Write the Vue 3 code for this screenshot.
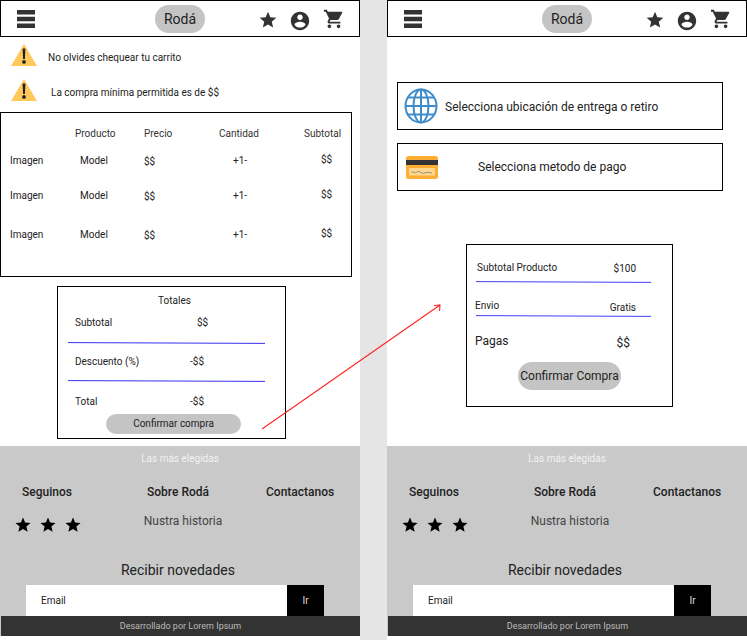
<script setup>
const tableRows = [
  { gap: 'row-a' },
  { gap: 'row-b' },
  { gap: 'row-c' },
];
const footerStars = [1, 2, 3];
</script>

<template>
  <div class="page">
    <section class="screen">
      <header class="topbar">
        <svg class="menu-icon" viewBox="0 0 18 18"><path d="M0 0h18v4.5H0zM0 6.8h18v4.5H0zM0 13.5h18V18H0z" /></svg>
        <span class="brand">Rodá</span>
        <svg class="top-icon star" viewBox="0 0 24 24"><path d="M12 17.27 18.18 21l-1.64-7.03L22 9.24l-7.19-.61L12 2 9.19 8.63 2 9.24l5.46 4.73L5.82 21z" /></svg>
        <svg class="top-icon account" viewBox="0 0 24 24"><path d="M12 2C6.48 2 2 6.48 2 12s4.48 10 10 10 10-4.48 10-10S17.52 2 12 2zm0 3c1.66 0 3 1.34 3 3s-1.34 3-3 3-3-1.34-3-3 1.34-3 3-3zm0 14.2c-2.5 0-4.71-1.28-6-3.22.03-1.99 4-3.08 6-3.08s5.97 1.09 6 3.08c-1.29 1.94-3.5 3.22-6 3.22z" /></svg>
        <svg class="top-icon cart" viewBox="0 0 24 24"><path d="M7 18c-1.1 0-1.99.9-1.99 2S5.900 22 7 22s2-.9 2-2-.9-2-2-2zM1 2v2h2l3.600 7.590-1.350 2.450c-.16.280-.25.610-.25.960 0 1.100.9 2 2 2h12v-2H7.420c-.14 0-.25-.110-.25-.25l.03-.12.9-1.630h7.450c.75 0 1.410-.41 1.750-1.030l3.580-6.490A1 1 0 0 0 20 4H5.210l-.94-2H1zm16 16c-1.100 0-1.990.9-1.990 2s.89 2 1.990 2 2-.9 2-2-.9-2-2-2z" /></svg>
      </header>

      <div class="alert alert-first">
        <svg class="warn" viewBox="0 0 26 22"><path d="M13 0 26 22H0z" fill="#ffc95c" /><path d="M11.600 4.500h2.800l-.5 10.500h-1.800zM13 16a1.900 1.900 0 1 1 0 3.800 1.900 1.900 0 0 1 0-3.800z" fill="#222" /></svg>
        <span>No olvides chequear tu carrito</span>
      </div>
      <div class="alert alert-second">
        <svg class="warn" viewBox="0 0 26 22"><path d="M13 0 26 22H0z" fill="#ffc95c" /><path d="M11.600 4.500h2.800l-.5 10.500h-1.800zM13 16a1.900 1.900 0 1 1 0 3.800 1.900 1.900 0 0 1 0-3.800z" fill="#222" /></svg>
        <span>La compra mínima permitida es de $$</span>
      </div>

      <div class="cart-table">
        <div class="table-row table-head">
          <span></span><span>Producto</span><span>Precio</span><span class="center">Cantidad</span><span class="last">Subtotal</span>
        </div>
        <div v-for="row in tableRows" :key="row.gap" class="table-row" :class="row.gap">
          <span>Imagen</span><span class="model">Model</span><span class="low">$$</span><span class="center qty">+1-</span><span class="last high">$$</span>
        </div>
      </div>

      <div class="totals">
        <div class="totals-title">Totales</div>
        <div class="total-row first"><span>Subtotal</span><span class="value-a">$$</span></div>
        <svg class="blue-line line-a" viewBox="0 0 197 2" preserveAspectRatio="none"><path d="M0 .6 197 1.400" /></svg>
        <div class="total-row second"><span>Descuento (%)</span><span class="value-b">-$$</span></div>
        <svg class="blue-line line-b" viewBox="0 0 197 2" preserveAspectRatio="none"><path d="M0 .6 197 1.400" /></svg>
        <div class="total-row third"><span>Total</span><span class="value-b">-$$</span></div>
        <button class="confirm">Confirmar compra</button>
      </div>

      <footer class="footer">
        <div class="footer-top">Las más elegidas</div>
        <div class="footer-cols">
          <div class="col col-follow">
            <strong>Seguinos</strong>
            <div class="stars">
              <svg v-for="s in footerStars" :key="s" viewBox="0 0 24 24"><path d="M12 17.27 18.18 21l-1.64-7.03L22 9.24l-7.19-.61L12 2 9.19 8.63 2 9.24l5.46 4.73L5.820 21z" /></svg>
            </div>
          </div>
          <div class="col col-about">
            <strong>Sobre Rodá</strong>
            <span>Nustra historia</span>
          </div>
          <div class="col col-contact">
            <strong>Contactanos</strong>
          </div>
        </div>
        <div class="news-title">Recibir novedades</div>
        <div class="news-form">
          <div class="email">Email</div>
          <div class="go">Ir</div>
        </div>
        <div class="credits">Desarrollado por Lorem Ipsum</div>
      </footer>
    </section>

    <section class="screen">
      <header class="topbar">
        <svg class="menu-icon" viewBox="0 0 18 18"><path d="M0 0h18v4.5H0zM0 6.8h18v4.5H0zM0 13.5h18V18H0z" /></svg>
        <span class="brand">Rodá</span>
        <svg class="top-icon star" viewBox="0 0 24 24"><path d="M12 17.27 18.18 21l-1.64-7.03L22 9.24l-7.19-.61L12 2 9.19 8.63 2 9.24l5.46 4.73L5.82 21z" /></svg>
        <svg class="top-icon account" viewBox="0 0 24 24"><path d="M12 2C6.48 2 2 6.48 2 12s4.48 10 10 10 10-4.48 10-10S17.52 2 12 2zm0 3c1.66 0 3 1.34 3 3s-1.34 3-3 3-3-1.34-3-3 1.34-3 3-3zm0 14.2c-2.5 0-4.71-1.28-6-3.22.03-1.99 4-3.08 6-3.08s5.97 1.09 6 3.08c-1.29 1.94-3.5 3.22-6 3.22z" /></svg>
        <svg class="top-icon cart" viewBox="0 0 24 24"><path d="M7 18c-1.1 0-1.99.9-1.99 2S5.900 22 7 22s2-.9 2-2-.9-2-2-2zM1 2v2h2l3.600 7.590-1.350 2.450c-.16.280-.25.610-.25.960 0 1.100.9 2 2 2h12v-2H7.420c-.14 0-.25-.110-.25-.25l.03-.12.9-1.630h7.450c.75 0 1.410-.41 1.750-1.030l3.580-6.490A1 1 0 0 0 20 4H5.210l-.94-2H1zm16 16c-1.100 0-1.990.9-1.990 2s.89 2 1.990 2 2-.9 2-2-.9-2-2-2z" /></svg>
      </header>

      <div class="choice choice-place">
        <svg class="globe" viewBox="0 0 34 36" fill="none" stroke="#3f8ccb" stroke-width="2">
          <ellipse cx="17" cy="18" rx="15.500" ry="16.500" />
          <ellipse cx="17" cy="18" rx="7.500" ry="16.500" />
          <path d="M17 1.500v33M1.500 18h31M4 9.500h26M4 26.500h26" />
        </svg>
        <span>Selecciona ubicación de entrega o retiro</span>
      </div>
      <div class="choice choice-pay">
        <svg class="card" viewBox="0 0 32 23">
          <rect width="32" height="23" rx="2.500" fill="#ffad33" />
          <rect y="4" width="32" height="5" fill="#333" />
          <rect x="3" y="12" width="26" height="7.500" fill="#ffd890" />
          <path d="M5 16.500c2-2 3 1 5 0s3-1.500 5 0 3 .5 5 0 3 0 6 .5" fill="none" stroke="#777" stroke-width=".8" />
        </svg>
        <span>Selecciona metodo de pago</span>
      </div>

      <div class="summary">
        <div class="sum-row sum-first"><span>Subtotal Producto</span><span class="sum-price">$100</span></div>
        <svg class="blue-line sum-line sum-line-a" viewBox="0 0 197 2" preserveAspectRatio="none"><path d="M0 .6 197 1.400" /></svg>
        <div class="sum-row sum-second"><span>Envio</span><span class="sum-free">Gratis</span></div>
        <svg class="blue-line sum-line sum-line-b" viewBox="0 0 197 2" preserveAspectRatio="none"><path d="M0 .6 197 1.400" /></svg>
        <div class="sum-row sum-pay"><span>Pagas</span><span class="sum-total">$$</span></div>
        <button class="confirm-big">Confirmar Compra</button>
      </div>

      <footer class="footer">
        <div class="footer-top">Las más elegidas</div>
        <div class="footer-cols">
          <div class="col col-follow">
            <strong>Seguinos</strong>
            <div class="stars">
              <svg v-for="s in footerStars" :key="s" viewBox="0 0 24 24"><path d="M12 17.27 18.18 21l-1.64-7.03L22 9.24l-7.19-.61L12 2 9.19 8.63 2 9.24l5.46 4.73L5.820 21z" /></svg>
            </div>
          </div>
          <div class="col col-about">
            <strong>Sobre Rodá</strong>
            <span>Nustra historia</span>
          </div>
          <div class="col col-contact">
            <strong>Contactanos</strong>
          </div>
        </div>
        <div class="news-title">Recibir novedades</div>
        <div class="news-form">
          <div class="email">Email</div>
          <div class="go">Ir</div>
        </div>
        <div class="credits">Desarrollado por Lorem Ipsum</div>
      </footer>
    </section>

    <svg class="arrow" viewBox="0 0 747 640" fill="none" stroke="#f22" stroke-width="1.100">
      <path d="M262 429 440 305M434 305.500 440 305 439.500 311" />
    </svg>
  </div>
</template>

<style scoped>
.page {
  position: relative;
  display: flex;
  gap: 27px;
  width: 747px;
  height: 640px;
  overflow: hidden;
  background: #e5e5e5;
  font-family: Roboto, "Liberation Sans", sans-serif;
  color: #222;
}
.screen {
  display: flex;
  flex-direction: column;
  width: 360px;
  height: 640px;
  background: #fff;
}
.topbar {
  display: flex;
  align-items: center;
  box-sizing: border-box;
  width: 360px;
  height: 37px;
  flex: none;
  border: 1px solid #000;
}
.menu-icon {
  width: 18px;
  height: 18px;
  margin-left: 16px;
  fill: #333;
}
.brand {
  display: flex;
  align-items: center;
  justify-content: center;
  width: 50px;
  height: 28px;
  margin-left: 120px;
  border-radius: 14px;
  background: #c4c4c4;
  font-size: 14px;
}
.top-icon {
  width: 22px;
  height: 22px;
  fill: #333;
}
.star { width: 20px; height: 20px; margin-left: 53px; margin-top: 3px; }
.account { margin-left: 11px; margin-top: 4px; }
.cart { margin-left: 12px; margin-top: 1px; }

.alert {
  display: flex;
  align-items: center;
  font-size: 10px;
}
.alert span { padding-top: 4px; }
.warn {
  width: 26px;
  height: 22px;
  flex: none;
}
.alert-first { margin: 7px 0 0 11px; gap: 11px; }
.alert-second { margin: 13px 0 0 11px; gap: 14px; }

.cart-table {
  box-sizing: border-box;
  width: 352px;
  height: 165px;
  margin-top: 11px;
  padding-top: 15px;
  border: 1px solid #000;
  font-size: 10px;
}
.table-row {
  display: grid;
  grid-template-columns: 65px 69px 71px 48px 1fr;
  height: 12px;
  padding-left: 9px;
  line-height: 12px;
}
.table-row .center { text-align: center; }
.table-row .qty { padding-left: 2px; }
.table-row .last { padding-left: 41px; }
.table-row .model { padding-left: 5px; }
.table-row .low { margin-top: 1px; }
.table-row .high { margin-top: -1px; padding-left: 58px; }
.table-head { color: #333; }
.row-a { margin-top: 15px; }
.row-b { margin-top: 23px; }
.row-c { margin-top: 27px; }

.totals {
  box-sizing: border-box;
  display: flex;
  flex-direction: column;
  width: 229px;
  height: 153px;
  margin: 9px 0 0 57px;
  padding: 8px 0 0 10px;
  border: 1px solid #000;
  font-size: 10px;
}
.totals-title {
  width: 213px;
  text-align: center;
  line-height: 12px;
}
.total-row {
  display: flex;
  height: 12px;
  padding-left: 7px;
  line-height: 12px;
}
.total-row span:first-child { width: 115px; }
.first { margin-top: 10px; }
.second { margin-top: 12px; }
.third { margin-top: 14px; }
.value-a { margin-left: 7px; }
.blue-line {
  display: block;
  flex: none;
  width: 197px;
  height: 2px;
  margin-top: 13px;
}
.line-b { margin-top: 12px; }
.blue-line path {
  fill: none;
  stroke: #3a30f2;
  stroke-width: 1;
}
.confirm {
  width: 135px;
  height: 20px;
  margin: 6px 0 0 38px;
  padding: 0 0 1px;
  border: 0;
  border-radius: 10px;
  background: #c4c4c4;
  color: #222;
  font: 10px Roboto, sans-serif;
}

.choice {
  box-sizing: border-box;
  display: flex;
  align-items: center;
  width: 326px;
  margin-left: 10px;
  border: 1px solid #000;
  font-size: 12px;
}
.choice-place {
  height: 48px;
  margin-top: 45px;
  padding-left: 6px;
  gap: 7px;
}
.choice-place span { padding-top: 2px; }
.choice-pay {
  height: 48px;
  margin-top: 13px;
  padding-left: 8px;
  gap: 40px;
}
.globe { width: 34px; height: 36px; flex: none; }
.card { width: 32px; height: 23px; flex: none; }

.summary {
  box-sizing: border-box;
  display: flex;
  flex-direction: column;
  width: 207px;
  height: 163px;
  margin: 53px 0 0 79px;
  padding: 17px 0 0 9px;
  border: 1px solid #000;
  font-size: 10px;
}
.sum-first { padding-left: 1px; width: 159px; }
.sum-row {
  display: flex;
  justify-content: space-between;
  line-height: 12px;
}
.sum-second, .sum-pay { width: 161px; margin-left: -1px; }
.sum-price { margin-top: 1px; }
.sum-free { margin-top: 2px; }
.sum-line { width: 175px; }
.sum-line-a { margin-top: 6px; }
.sum-line-b { margin-top: 1px; }
.sum-second { margin-top: 17px; }
.sum-pay {
  margin-top: 18px;
  font-size: 12px;
}
.sum-total { margin-right: 6px; margin-top: 2px; }
.confirm-big {
  width: 103px;
  height: 28px;
  margin: 13px 0 0 42px;
  padding: 0;
  border: 0;
  border-radius: 14px;
  background: #c4c4c4;
  color: #222;
  font: 12px Roboto, sans-serif;
  white-space: nowrap;
}

.footer {
  margin-top: auto;
  margin-bottom: 4px;
  display: flex;
  flex-direction: column;
  height: 190px;
  flex: none;
  background: #c9c9c9;
}
.footer-top {
  margin-top: 7px;
  height: 12px;
  line-height: 12px;
  text-align: center;
  font-size: 10px;
  color: #f2f2f2;
}
.footer-cols {
  display: grid;
  grid-template-columns: 118px 120px 1fr;
  height: 60px;
  margin-top: 20px;
}
.col {
  display: flex;
  flex-direction: column;
}
.col strong {
  line-height: 14px;
  font-size: 12px;
  font-weight: 500;
  white-space: nowrap;
}
.col-follow { padding-left: 22px; }
.col-about { align-items: center; }
.col-contact { padding-left: 28px; }
.col-about span {
  margin: 15px 0 0 10px;
  font-size: 12px;
  color: #444;
}
.stars {
  display: flex;
  gap: 7px;
  margin: 17px 0 0 -8px;
}
.stars svg {
  width: 18px;
  height: 18px;
  fill: #000;
}
.news-title {
  margin-top: 17px;
  padding-right: 4px;
  text-align: center;
  font-size: 14px;
  line-height: 16px;
}
.news-form {
  display: flex;
  height: 31px;
  margin: 7px 0 0 26px;
  font-size: 10px;
}
.email {
  width: 261px;
  padding-left: 15px;
  box-sizing: border-box;
  line-height: 31px;
  background: #fff;
}
.go {
  width: 37px;
  text-align: center;
  line-height: 31px;
  background: #000;
  color: #ddd;
}
.credits {
  height: 20px;
  line-height: 20px;
  margin-left: 1px;
  text-align: center;
  font-size: 9px;
  color: #bbb;
  background: #333;
}

.arrow {
  position: absolute;
  top: 0;
  left: 0;
  width: 747px;
  height: 640px;
  pointer-events: none;
}
</style>
